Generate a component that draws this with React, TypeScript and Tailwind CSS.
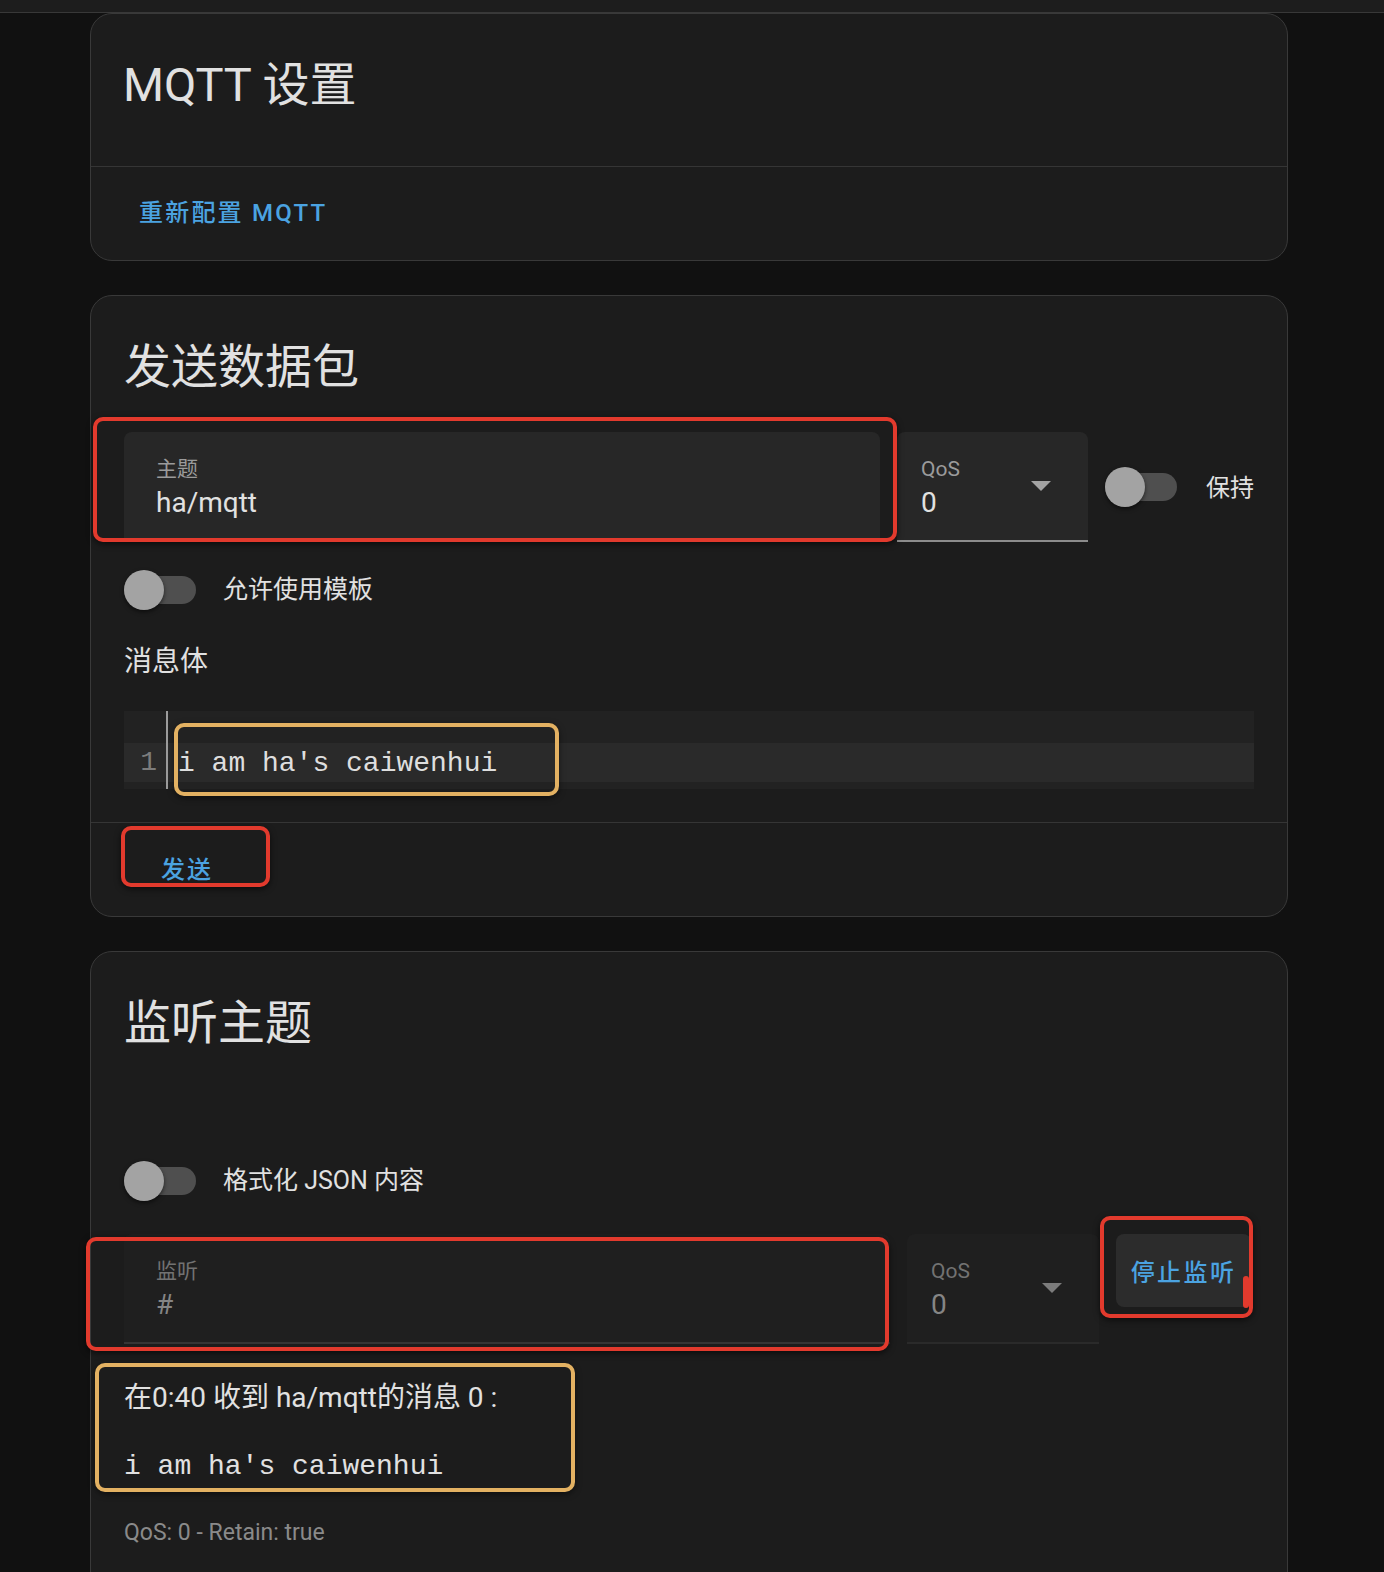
import React from "react";

// annotation overlays drawn on top of the screenshot
function RedBox({ className }: { className: string }) {
  return (
    <div
      className={
        "pointer-events-none absolute rounded-[10px] border-[4px] border-[#e23a2d] shadow-[0_2px_6px_rgba(0,0,0,0.6)] " +
        className
      }
    />
  );
}

function YellowBox({ className }: { className: string }) {
  return (
    <div
      className={
        "pointer-events-none absolute rounded-[10px] border-[4px] border-[#e3b162] shadow-[0_2px_6px_rgba(0,0,0,0.5)] " +
        className
      }
    />
  );
}

function Toggle() {
  return (
    <div className="relative h-[40px] w-[72px] shrink-0">
      <div className="absolute left-0 right-0 top-[6px] h-[28px] rounded-full bg-[#4f4f4f]" />
      <div className="absolute left-0 top-0 h-[40px] w-[40px] rounded-full bg-[#a3a3a3] shadow-[0_2px_4px_rgba(0,0,0,0.55)]" />
    </div>
  );
}

function Caret({ color }: { color: string }) {
  return (
    <svg width="20" height="10" viewBox="0 0 20 10" className="shrink-0 self-center">
      <polygon points="0,0 20,0 10,10" fill={color} />
    </svg>
  );
}

function CardTitle({ children }: { children: React.ReactNode }) {
  return (
    <div className="px-[33px] pt-[39px]">
      <h1 className="text-[47px] leading-[64px] text-[#e1e1e1]">{children}</h1>
    </div>
  );
}

export default function App() {
  return (
    <div className="h-[1572px] overflow-hidden bg-[#111111] font-['Roboto','Noto_Sans_CJK_SC',sans-serif]">
      <div className="h-[13px] border-b border-[#383838] bg-[#1d1d1d]" />

      {/* MQTT 设置 */}
      <div className="ml-[90px] w-[1198px] rounded-[22px] border border-[#393939] bg-[#1c1c1c]">
        <div className="px-[32px] pt-[39px] pb-[49px]">
          <h1 className="text-[47px] leading-[64px] text-[#e1e1e1]">MQTT 设置</h1>
        </div>
        <div className="border-t border-[#353535] px-[16px] pt-[14px] pb-[15px]">
          <button className="h-[64px] px-[32px] text-[24px] font-medium tracking-[2.2px] text-[#4ba3e1]">
            重新配置 MQTT
          </button>
        </div>
      </div>

      {/* 发送数据包 */}
      <div className="mt-[34px] ml-[90px] w-[1198px] rounded-[22px] border border-[#393939] bg-[#1c1c1c]">
        <CardTitle>发送数据包</CardTitle>
        <div className="px-[33px] pb-[33px]">
          <div className="mt-[33px] flex items-center gap-[17px]">
            <div className="relative h-[110px] flex-1 rounded-t-[8px] border-b-2 border-[#8c8c8c] bg-[#272727] px-[32px] pt-[24px]">
              <div className="text-[21px] leading-[26px] text-[#9b9b9b]">主题</div>
              <div className="mt-[4px] text-[28px] leading-[34px] text-[#e1e1e1]">ha/mqtt</div>
              <RedBox className="-left-[31px] -top-[15px] -right-[17px] -bottom-[2px]" />
            </div>
            <div className="flex h-[110px] w-[191px] rounded-t-[8px] border-b-2 border-[#8c8c8c] bg-[#272727] pl-[24px] pr-[37px]">
              <div className="flex-1 pt-[24px]">
                <div className="text-[21px] leading-[26px] text-[#9b9b9b]">QoS</div>
                <div className="mt-[4px] text-[28px] leading-[34px] text-[#e1e1e1]">0</div>
              </div>
              <Caret color="#a3a3a3" />
            </div>
            <Toggle />
            <div className="ml-[12px] pt-[2px] text-[24px] leading-[40px] text-[#e1e1e1]">保持</div>
          </div>

          <div className="mt-[28px] flex items-center gap-[27px]">
            <Toggle />
            <div className="text-[25px] leading-[40px] text-[#e1e1e1]">允许使用模板</div>
          </div>

          <div className="mt-[32px] text-[28px] leading-[40px] text-[#e1e1e1]">消息体</div>

          <div className="relative mt-[29px] h-[78px] bg-[#222222] pt-[32px]">
            <div className="flex h-[39px] items-center bg-[#2a2a2a] font-['Liberation_Mono',monospace] text-[28px] leading-[39px]">
              <div className="w-[42px] pr-[9px] text-right text-[#7c7c7c]">1</div>
              <div className="pl-[12px] pt-[2px] whitespace-pre text-[#dedede]">i am ha's caiwenhui</div>
            </div>
            <div className="absolute left-[42px] top-0 bottom-0 w-[2px] bg-[#9c9c9c]" />
            <YellowBox className="left-[50px] top-[12px] h-[73px] w-[385px]" />
          </div>
        </div>
        <div className="relative border-t border-[#353535] pl-[38px] pt-[15px] pb-[14px]">
          <button className="h-[64px] px-[32px] text-[24px] font-medium tracking-[2.1px] text-[#4ba3e1]">
            发送
          </button>
          <RedBox className="left-[30px] top-[3px] h-[61px] w-[149px]" />
        </div>
      </div>

      {/* 监听主题 */}
      <div className="mt-[34px] ml-[90px] w-[1198px] rounded-t-[22px] border border-[#393939] bg-[#1c1c1c]">
        <CardTitle>监听主题</CardTitle>
        <div className="px-[33px] pb-[60px]">
          <div className="mt-[106px] flex items-center gap-[27px]">
            <Toggle />
            <div className="text-[25px] leading-[40px] text-[#e1e1e1]">格式化 JSON 内容</div>
          </div>

          <div className="mt-[33px] flex items-start gap-[17px]">
            <div className="relative h-[110px] flex-1 rounded-t-[8px] border-b-2 border-[#353535] bg-[#1f1f1f] px-[32px] pt-[24px]">
              <div className="text-[21px] leading-[26px] text-[#727272]">监听</div>
              <div className="mt-[4px] text-[28px] leading-[34px] text-[#858585]">#</div>
              <RedBox className="-left-[38px] top-[3px] right-[1px] -bottom-[9px]" />
            </div>
            <div className="flex h-[110px] w-[192px] rounded-t-[8px] border-b-2 border-[#2a2a2a] bg-[#1f1f1f] pl-[24px] pr-[37px]">
              <div className="flex-1 pt-[24px]">
                <div className="text-[21px] leading-[26px] text-[#727272]">QoS</div>
                <div className="mt-[4px] text-[28px] leading-[34px] text-[#858585]">0</div>
              </div>
              <Caret color="#7c7c7c" />
            </div>
            <div className="relative mr-[3px]">
              <button className="flex h-[73px] w-[135px] items-center justify-center rounded-[8px] bg-[#2c2c2c] pt-[4px] text-[24px] font-medium tracking-[2.4px] text-[#4ba3e1]">
                停止监听
              </button>
              <RedBox className="-left-[16px] -top-[18px] -right-[2px] -bottom-[11px]" />
              <div className="pointer-events-none absolute right-[2px] top-[42px] h-[32px] w-[6px] rounded-full bg-[#e23a2d]" />
            </div>
          </div>

          <div className="relative mt-[36px]">
            <p className="text-[28px] leading-[36px] text-[#e1e1e1]">在0:40 收到 ha/mqtt的消息 0 :</p>
            <pre className="mt-[33px] font-['Liberation_Mono',monospace] text-[28px] leading-[36px] text-[#e1e1e1]">
              i am ha's caiwenhui
            </pre>
            <YellowBox className="-left-[29px] -top-[17px] -bottom-[7px] w-[480px]" />
          </div>

          <p className="mt-[30px] text-[23px] leading-[36px] text-[#8a8a8a]">QoS: 0 - Retain: true</p>
        </div>
      </div>
    </div>
  );
}
